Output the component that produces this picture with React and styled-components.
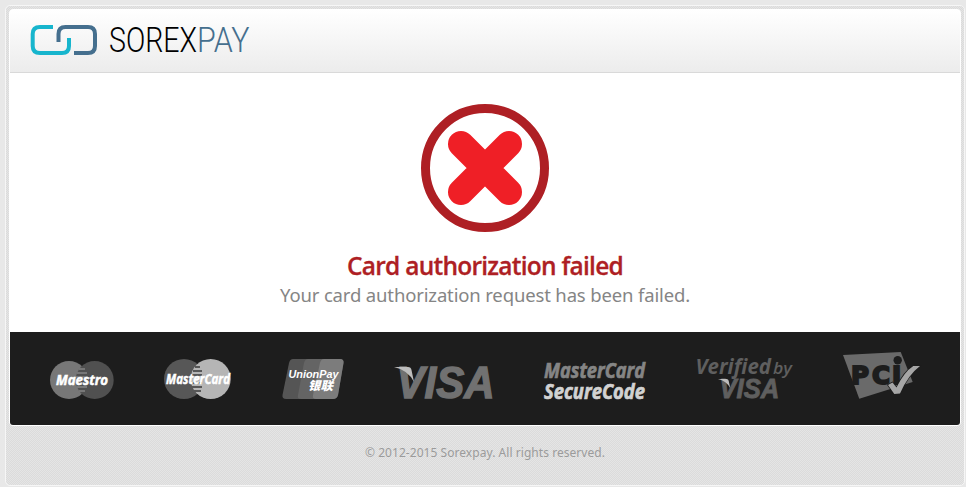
import React from "react";
import styled, { createGlobalStyle } from "styled-components";

const GlobalStyle = createGlobalStyle`
  * {
    box-sizing: border-box;
  }
  body {
    margin: 0;
    background: #e8e8e8;
    font-family: "Noto Sans", "Open Sans", sans-serif;
  }
`;

const Page = styled.div`
  height: 487px;
  padding: 5px 1px 0 5px;
  overflow: hidden;
`;

const Frame = styled.div`
  height: 481px;
  padding: 3px;
  border: 1px solid #f6f6f6;
  border-radius: 5px;
  background: repeating-conic-gradient(#dbdbdb 0 25%, #e5e5e5 0 50%) 0 0 / 2px
    2px;
`;

const Card = styled.main`
  height: 417px;
  border: 1px solid #fff;
  border-radius: 4px;
  background: #fff;
  overflow: hidden;
`;

const Header = styled.header`
  height: 63px;
  padding: 9px 0 0 18px;
  border-bottom: 1px solid #d9d9d9;
  background: linear-gradient(#ffffff, #ececec);
`;

const LogoSvg = styled.svg`
  display: block;
  overflow: visible;
  font-family: Roboto, sans-serif;
  font-size: 35px;
  font-weight: 300;
`;

const Result = styled.section`
  height: 259px;
  padding-top: 30px;
  display: flex;
  flex-direction: column;
  align-items: center;
`;

const Title = styled.h1`
  margin: 16px 0 0;
  font-family: "Open Sans", sans-serif;
  font-size: 24.5px;
  line-height: 34px;
  font-weight: 600;
  letter-spacing: ${(props) => props.$spacing};
  color: #ae1f24;
  -webkit-text-stroke: 0.3px #ae1f24;
`;

const Message = styled.p`
  margin: 0;
  font-size: 18.5px;
  line-height: 24px;
  letter-spacing: ${(props) => props.$spacing};
  color: #858585;
`;

const Marks = styled.div`
  height: 93px;
  padding: 18px 0 0 40px;
  display: flex;
  gap: 50px;
  background: #1d1d1d;
`;

const Mark = styled.svg`
  flex: none;
  height: 60px;
  width: ${(props) => props.$width}px;
  overflow: visible;
  font-family: ${(props) => props.$font || '"Open Sans", sans-serif'};
  font-weight: 700;
  font-variant-ligatures: none;
`;

const CircleText = styled.text`
  font-style: italic;
  fill: #fff;
  stroke: #fff;
  stroke-width: 0.5px;
`;

const Copyright = styled.footer`
  padding-top: 18px;
  text-align: center;
  font-size: 12px;
  line-height: 18px;
  letter-spacing: ${(props) => props.$spacing};
  color: #9b9b9b;
`;

const Logo = () => (
  <LogoSvg width="224" height="46" viewBox="28 19 224 46" fill="none">
    <path
      d="M53 27H40Q32.7 27 32.7 34V46Q32.7 53 40 53H62Q69 53 69 46V38"
      stroke="#17b5cd"
      strokeWidth="4"
    />
    <path
      d="M58.5 42V34Q58.5 27 65.5 27H88Q95 27 95 34V46Q95 53 88 53H74"
      stroke="#456f8e"
      strokeWidth="4"
    />
    <text
      x="109"
      y="52"
      fill="#000"
      textLength="88"
      lengthAdjust="spacingAndGlyphs"
    >
      SOREX
    </text>
    <text
      x="197"
      y="52"
      fill="#456f8e"
      textLength="52.5"
      lengthAdjust="spacingAndGlyphs"
    >
      PAY
    </text>
  </LogoSvg>
);

const FailedIcon = () => (
  <svg width="130" height="130" viewBox="0 0 130 130" fill="none">
    <circle cx="65" cy="65" r="59.5" stroke="#ae1f24" strokeWidth="9" />
    <path
      d="M41 41L89 89M89 41L41 89"
      stroke="#ef1f26"
      strokeWidth="26"
      strokeLinecap="round"
    />
  </svg>
);

const Maestro = () => (
  <Mark $width={64}>
    <circle cx="19" cy="30" r="19" fill="#777" />
    <circle cx="44.7" cy="30" r="19" fill="#505050" />
    <path
      d="M29 19H35M27 23H37M26 27H38M26 33H38M27 37H37M29 41H35"
      stroke="#777"
      strokeWidth="2"
    />
    <CircleText
      x="6"
      y="34.5"
      fontSize="13.5"
      textLength="52"
      lengthAdjust="spacingAndGlyphs"
    >
      Maestro
    </CircleText>
  </Mark>
);

const MasterCard = () => (
  <Mark $width={68}>
    <circle cx="20" cy="29" r="20" fill="#575757" />
    <circle cx="46.7" cy="29" r="20" fill="#b5b5b5" />
    <path
      d="M31 17H36M29 21H38M28 25H38M28 33H38M28 37H38M30 41H37"
      stroke="#575757"
      strokeWidth="2"
    />
    <CircleText
      x="2"
      y="34"
      fontSize="14"
      textLength="64"
      lengthAdjust="spacingAndGlyphs"
    >
      MasterCard
    </CircleText>
  </Mark>
);

const UnionPay = () => (
  <Mark $width={62} $font='"Liberation Sans", "Noto Sans CJK SC", sans-serif'>
    <path
      d="M11 9H58Q62 9 61.5 13L56 45Q55 49 51 49H4Q0 49 .5 45L7 13Q8 9 11 9Z"
      fill="#555"
    />
    <path d="M26 9H45L37 49H19Q15 49 16 45L22 13Q23 9 26 9Z" fill="#646464" />
    <path
      d="M42 9H58Q62 9 61.5 13L56 45Q55 49 51 49H34Q30 49 31 45L38 13Q39 9 42 9Z"
      fill="#7c7c7c"
    />
    <text
      x="6.5"
      y="28"
      fontSize="11.5"
      fontStyle="italic"
      fill="#fff"
      textLength="50"
      lengthAdjust="spacingAndGlyphs"
    >
      UnionPay
    </text>
    <text
      x="26"
      y="40"
      fontSize="12"
      fontWeight="900"
      fontStyle="italic"
      fill="#fff"
      textLength="25"
      lengthAdjust="spacingAndGlyphs"
    >
      银联
    </text>
  </Mark>
);

const VisaText = styled.text`
  font-family: "Liberation Sans", sans-serif;
  font-size: 44px;
  font-style: italic;
  stroke-width: 1.4px;
`;

const VisaWord = ({ color, flag }) => (
  <>
    <VisaText
      x="2.5"
      y="47.5"
      fill={color}
      stroke={color}
      textLength="98"
      lengthAdjust="spacingAndGlyphs"
    >
      VISA
    </VisaText>
    <path d="M0 17H14Q17 17 17.5 20L20 32Q14 20 0 17Z" fill={flag} />
  </>
);

const Visa = () => (
  <Mark $width={100}>
    <VisaWord color="#717171" flag="#bdbdbd" />
  </Mark>
);

const SecureCode = () => (
  <Mark $width={102}>
    <g fontSize="21.5" fontStyle="italic" strokeWidth=".7">
      <text
        x="0"
        y="27.5"
        fill="#858585"
        stroke="#858585"
        textLength="101"
        lengthAdjust="spacingAndGlyphs"
      >
        MasterCard
      </text>
      <text
        x="0"
        y="48.5"
        fill="#d2d2d2"
        stroke="#d2d2d2"
        textLength="101"
        lengthAdjust="spacingAndGlyphs"
      >
        SecureCode
      </text>
    </g>
  </Mark>
);

const VerifiedByVisa = () => (
  <Mark $width={97}>
    <g fill="#5f5f5f" fontStyle="italic" fontWeight="700">
      <text
        x="-.5"
        y="23.7"
        fontSize="21.5"
        textLength="75.5"
        lengthAdjust="spacingAndGlyphs"
      >
        Verified
      </text>
      <text
        x="77"
        y="23.7"
        fontSize="17"
        fontWeight="600"
        textLength="19"
        lengthAdjust="spacingAndGlyphs"
      >
        by
      </text>
    </g>
    <g transform="translate(22 18.6) scale(.61)">
      <VisaWord color="#5f5f5f" flag="#bdbdbd" />
    </g>
  </Mark>
);

const Pci = () => (
  <Mark $width={77} $font='"DejaVu Sans", sans-serif'>
    <path d="M0 5L57.7 2L69.7 32L16.3 48.7Z" fill="#6a6a6a" />
    <text
      x="8 29 49"
      y="34"
      fontSize="24.5"
      fill="#1d1d1d"
      stroke="#1d1d1d"
      strokeWidth="2"
    >
      PCI
    </text>
    <circle cx="54.7" cy="10.3" r="4.2" fill="#1d1d1d" />
    <path
      d="M45 35L49.5 32.5L53.5 37.5Q61 22 70.3 16H77Q65 25 57 43.5L51.3 44Z"
      fill="#a6a6a6"
      stroke="#1d1d1d"
      strokeWidth="1.5"
      paintOrder="stroke"
    />
  </Mark>
);

const App = () => {
  return (
    <>
      <GlobalStyle />
      <Page>
        <Frame>
          <Card>
            <Header>
              <Logo />
            </Header>
            <Result>
              <FailedIcon />
              <Title $spacing="-0.75px">Card authorization failed</Title>
              <Message $spacing="-0.15px">
                Your card authorization request has been failed.
              </Message>
            </Result>
            <Marks>
              <Maestro />
              <MasterCard />
              <UnionPay />
              <Visa />
              <SecureCode />
              <VerifiedByVisa />
              <Pci />
            </Marks>
          </Card>
          <Copyright $spacing="0.05px">
            © 2012-2015 Sorexpay. All rights reserved.
          </Copyright>
        </Frame>
      </Page>
    </>
  );
};

export default App;
